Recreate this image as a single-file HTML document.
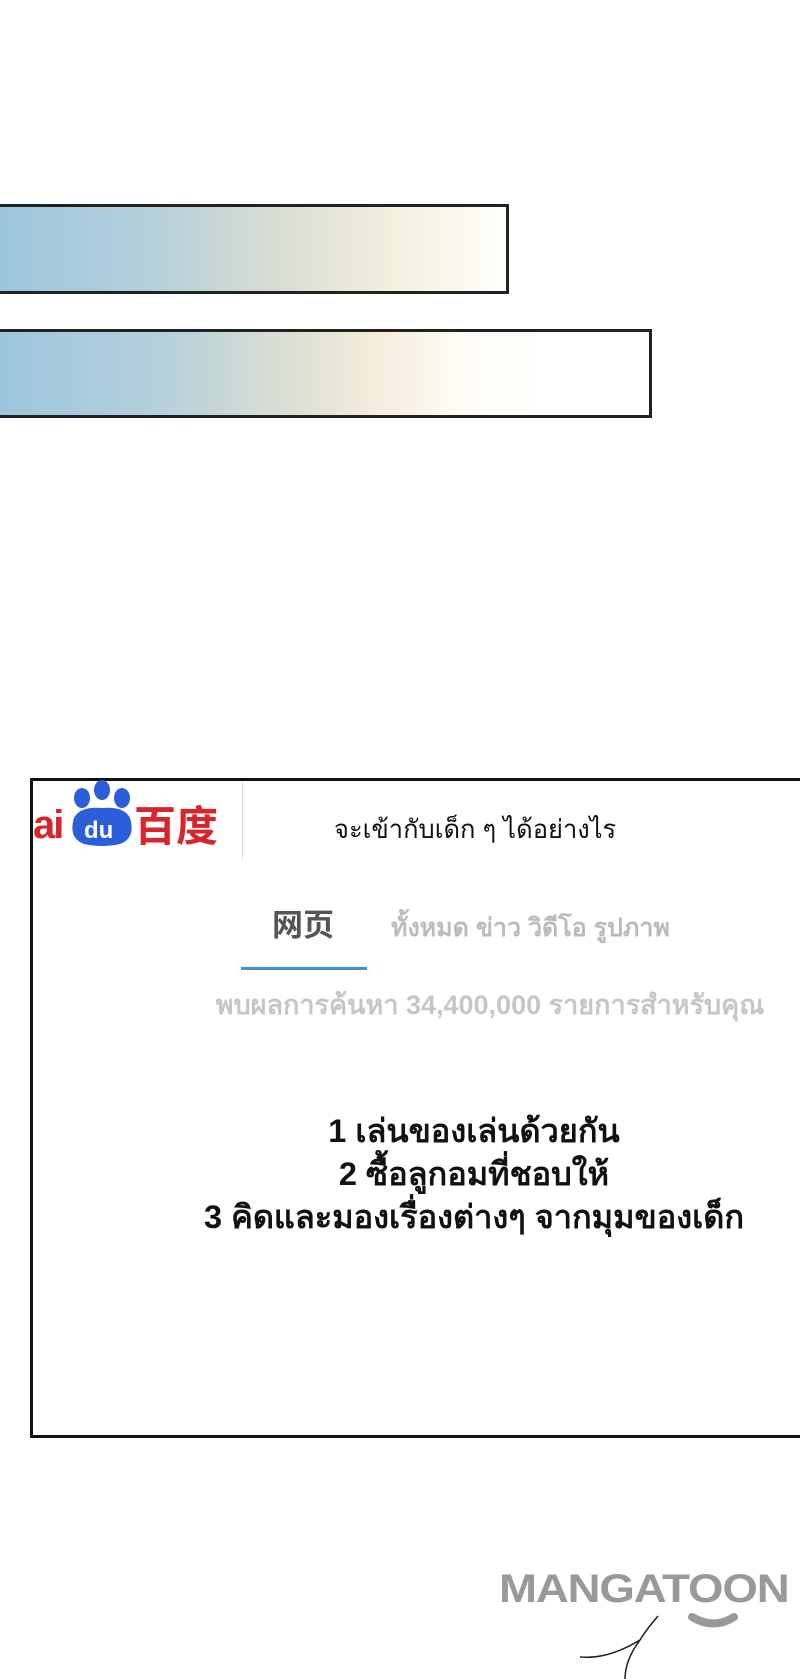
<!DOCTYPE html>
<html><head><meta charset="utf-8"><style>
body{margin:0;width:800px;height:1679px;background:#fff;position:relative;overflow:hidden;font-family:"Liberation Sans","DejaVu Sans",sans-serif}
.a{position:absolute;white-space:nowrap}
.bar{position:absolute;left:-4px;border:3px solid #222;box-sizing:border-box}
</style></head><body>
<div class="bar" style="top:204px;width:513px;height:90px;background:linear-gradient(90deg,#9cc6dc 0%,#b4d0db 30%,#d8ddd2 55%,#f4efdf 78%,#fffefa 100%)"></div>
<div class="bar" style="top:329px;width:656px;height:89px;background:linear-gradient(90deg,#9cc6dc 0%,#b4d0db 25%,#dcdfd3 45%,#f5ecdc 58%,#fffdf6 72%,#fff 85%)"></div>

<div class="a" style="left:30px;top:778px;width:780px;height:660px;border:3px solid #111;box-sizing:border-box;background:#fff"></div>
<div class="a" style="left:33px;top:803px;font:bold 40px 'Liberation Sans',sans-serif;color:#d8242a;letter-spacing:-2px">ai</div>
<svg class="a" style="left:60px;top:780px" width="84" height="72" viewBox="0 0 84 72">
<ellipse cx="22" cy="18" rx="8" ry="10" fill="#2b5fd8"/><ellipse cx="42" cy="10" rx="8" ry="10" fill="#2b5fd8"/><ellipse cx="62" cy="18" rx="8" ry="10" fill="#2b5fd8"/>
<path d="M14 38 Q20 26 42 28 Q64 26 70 38 Q76 58 60 64 Q42 68 24 64 Q8 58 14 38Z" fill="#2b5fd8"/>
<text x="24" y="58" font-family="Liberation Sans" font-weight="bold" font-size="24" fill="#fff">du</text></svg>
<div class="a" style="left:134px;top:800px;font:bold 42px 'Noto Sans CJK SC',sans-serif;color:#d8242a;line-height:48px">百度</div>
<div class="a" style="left:242px;top:782px;width:1px;height:78px;background:#ddd"></div>
<div class="a" style="left:334px;top:810px;font:25.5px 'Liberation Sans','DejaVu Sans',sans-serif;color:#111">จะเข้ากับเด็ก ๆ ได้อย่างไร</div>
<div class="a" style="left:272px;top:904px;font:bold 31px 'Noto Sans CJK SC',sans-serif;color:#555;line-height:38px">网页</div>
<div class="a" style="left:391px;top:908px;font:bold 25px 'Liberation Sans',sans-serif;color:#bbb">ทั้งหมด ข่าว วิดีโอ รูปภาพ</div>
<div class="a" style="left:241px;top:967px;width:126px;height:3px;background:#3b8fdc"></div>
<div class="a" style="left:190px;top:983px;width:600px;text-align:center;font:bold 27px 'Liberation Sans',sans-serif;color:#c6c6c6">พบผลการค้นหา 34,400,000 รายการสำหรับคุณ</div>
<div class="a" style="left:174px;top:1110px;width:600px;text-align:center;font:bold 32.5px/43px 'Liberation Sans',sans-serif;color:#111">1 เล่นของเล่นด้วยกัน<br>2 ซื้อลูกอมที่ชอบให้<br>3 คิดและมองเรื่องต่างๆ จากมุมของเด็ก</div>

<div class="a" style="left:499px;top:1567px;font:900 40px 'Liberation Sans',sans-serif;color:#999;letter-spacing:-1px;transform:scaleX(1.14);transform-origin:0 0">MANGATOON</div>
<svg class="a" style="left:580px;top:1600px" width="220" height="79" viewBox="0 0 220 79">
<path d="M112 17 Q134 30 154 17" stroke="#999" stroke-width="8" fill="none" stroke-linecap="round"/>
<path d="M-25 48 Q10 70 60 40 Q45 60 45 79" stroke="#222" stroke-width="1.5" fill="none"/>
<path d="M60 40 Q66 30 78 16" stroke="#222" stroke-width="1.5" fill="none"/>
</svg>
</body></html>
